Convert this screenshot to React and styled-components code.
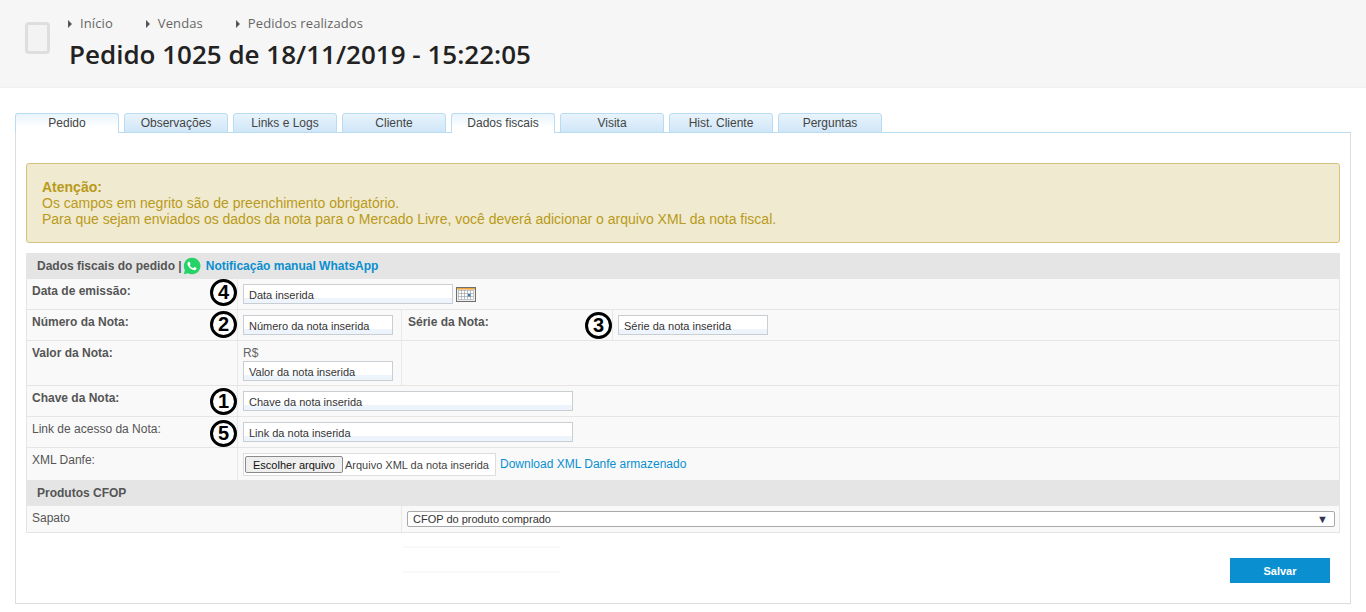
import React from "react";
import styled, { createGlobalStyle } from "styled-components";

const Global = createGlobalStyle`
  html, body { margin: 0; padding: 0; background: #fff; }
  body { font-family: "Liberation Sans", Arial, sans-serif; font-size: 12px; color: #555; }
  * { box-sizing: border-box; }
`;

const Header = styled.header`
  height: 88px;
  background: #f6f6f6;
  border-bottom: 1px solid #f0f0f0;
  display: flex;
  padding: 22px 0 0 25px;
`;
const PageIcon = styled.div`
  width: 25px;
  height: 32px;
  border: 3px solid #dedede;
  border-radius: 4px;
  background: #f3f3f3;
  flex: none;
`;
const HeaderText = styled.div`
  margin: -7px 0 0 19px;
  font-family: "Open Sans", sans-serif;
`;
const Crumbs = styled.nav`
  display: flex;
  height: 17px;
  margin-left: -1px;
`;
const Crumb = styled.span`
  display: flex;
  align-items: center;
  font-size: 13px;
  line-height: 17px;
  color: #666;
  letter-spacing: 0.1px;
  margin-right: 33px;
  &::before {
    content: "";
    border-left: 4px solid #555;
    border-top: 4px solid transparent;
    border-bottom: 4px solid transparent;
    margin-right: 8px;
  }
`;
const Title = styled.h1`
  margin: 5px 0 0;
  font-size: 26px;
  line-height: 34px;
  font-weight: 600;
  color: #222;
`;

const Main = styled.main`
  padding: 25px 15px 0;
`;
const Tabs = styled.div`
  display: flex;
  gap: 5px;
  height: 20px;
  position: relative;
  z-index: 1;
`;
const Tab = styled.div`
  width: 104px;
  height: 20px;
  border: 1px solid #b9dcf3;
  border-bottom: ${p => (p.$active ? "none" : "1px solid #b9dcf3")};
  border-radius: 3px 3px 0 0;
  background: ${p => (p.$active ? "linear-gradient(#e8f4fc, #fff 70%)" : "linear-gradient(#e9f4fc, #cfe6f8)")};
  text-align: center;
  font-size: 12px;
  line-height: 18px;
  color: #444;
`;
const Panel = styled.section`
  margin-top: -1px;
  height: 472px;
  width: 1336px;
  border: 1px solid #ddd;
  border-top-color: #b9dcf3;
  padding: 30px 10px 0 10px;
`;
const Alert = styled.div`
  height: 80px;
  width: 1314px;
  background: #f0ead0;
  border: 1px solid #d5c27c;
  border-radius: 3px;
  padding: 15px 15px;
  font-size: 14px;
  line-height: 16px;
  color: #b99a1a;
  strong { display: block; }
`;
const Form = styled.div`
  margin-top: 10px;
  width: 1314px;
  display: grid;
  grid-template-columns: 211px 164px 211px 1fr;
  background: #f9f9f9;
  border-left: 1px solid #e5e5e5;
  border-right: 1px solid #e5e5e5;
  border-bottom: 1px solid #e5e5e5;
`;
const SectionHead = styled.div`
  grid-column: 1 / -1;
  height: ${p => p.$h}px;
  background: #e5e5e5;
  display: flex;
  align-items: center;
  padding-left: 10px;
  font-weight: 700;
  font-size: 12px;
  color: #555;
`;
const WaIcon = styled.svg`
  width: 18px;
  height: 18px;
  margin: 0 5px 0 1px;
  flex: none;
`;
const WaLink = styled.a`
  color: #0a8fd0;
  font-weight: 700;
`;
const Cell = styled.div`
  grid-column: ${p => p.$span || "auto"};
  height: ${p => p.$h}px;
  border-bottom: ${p => (p.$flat ? "none" : "1px solid #e5e5e5")};
  border-right: ${p => (p.$last ? "none" : "1px solid #e8e8e8")};
`;
const LabelCell = styled(Cell)`
  display: flex;
  justify-content: space-between;
  align-items: flex-start;
  padding: 5px 0 0 ${p => p.$inset || 5}px;
  font-size: 12px;
  line-height: 14px;
  color: #555;
  font-weight: ${p => (p.$bold ? 700 : 400)};
`;
const FieldCell = styled(Cell)`
  display: flex;
  flex-direction: ${p => (p.$col ? "column" : "row")};
  align-items: flex-start;
  padding: 5px 0 0 5px;
`;
const Marker = styled.span`
  width: 27px;
  height: 27px;
  margin-top: ${p => p.$lift}px;
  border: 3px solid #000;
  border-radius: 50%;
  background: #fff;
  color: #000;
  font-size: 20px;
  line-height: 21px;
  font-weight: 700;
  text-align: center;
  flex: none;
`;
const Input = styled.input`
  width: ${p => p.$w}px;
  height: 20px;
  border: 1px solid #c9ced3;
  background: linear-gradient(#fff 72%, #edf4fb 72%);
  padding: 2px 5px 0;
  margin: 0;
  font-family: "Liberation Sans", Arial, sans-serif;
  font-size: 11px;
  color: #333;
  outline: none;
`;
const Currency = styled.span`
  font-size: 12px;
  line-height: 14px;
  margin-bottom: 1px;
  color: #666;
`;
const CalIcon = styled.svg`
  width: 20px;
  height: 15px;
  margin: 3px 0 0 3px;
  flex: none;
`;
const FileBox = styled.div`
  width: 253px;
  height: 23px;
  border: 1px solid #ddd;
  background: #fff;
  display: flex;
  align-items: center;
  padding-left: 1px;
  font-size: 11px;
  white-space: nowrap;
  color: #444;
`;
const FileButton = styled.button`
  width: 98px;
  height: 17px;
  padding: 0;
  margin-right: 2px;
  background: #efefef;
  border: 1px solid #8a8a8a;
  border-radius: 2px;
  font-family: "Liberation Sans", Arial, sans-serif;
  font-size: 11px;
  color: #111;
`;
const Download = styled.a`
  margin: 4px 0 0 4px;
  font-size: 12px;
  line-height: 14px;
  color: #0a8fd0;
`;
const SelectBox = styled.div`
  width: 928px;
  height: 16px;
  border: 1px solid #a9a9a9;
  border-radius: 2px;
  background: #fff;
  display: flex;
  justify-content: space-between;
  align-items: center;
  padding: 0 6px 0 5px;
  font-size: 11px;
  color: #333;
`;
const Arrow = styled.span`
  font-size: 11px;
  color: #333355;
`;
const Footer = styled.div`
  display: flex;
  justify-content: space-between;
  align-items: flex-start;
`;
const Ghosts = styled.div`
  display: flex;
  flex-direction: column;
  gap: 23px;
  margin: 13px 0 0 377px;
`;
const Ghost = styled.div`
  width: 157px;
  height: 2px;
  background: #f9f9f9;
`;
const Save = styled.button`
  width: 100px;
  height: 25px;
  margin: 25px 10px 0 0;
  border: none;
  background: #0a90d0;
  color: #fff;
  font-family: "Liberation Sans", Arial, sans-serif;
  font-size: 11px;
  font-weight: 700;
`;

const tabs = ["Pedido", "Observações", "Links e Logs", "Cliente", "Dados fiscais", "Visita", "Hist. Cliente", "Perguntas"];

const Calendar = () => (
  <CalIcon viewBox="0 0 20 15">
    <rect x="0.5" y="0.5" width="19" height="14" fill="#ececec" stroke="#6f6f6f" />
    <rect x="1" y="1" width="18" height="1.5" fill="#eda63a" />
    <g fill="#fff" stroke="#a4a8b0" strokeWidth="0.6">
      {[2.5, 5.5, 8.5, 11.5, 14.5].map(x => [3.5, 6.5, 9.5].map(y => <rect key={`${x}-${y}`} x={x} y={y} width="3" height="3" />))}
    </g>
    <rect x="12" y="7" width="2.5" height="2.5" fill="#2d7fb8" />
  </CalIcon>
);

const Whatsapp = () => (
  <WaIcon viewBox="0 0 24 24">
    <path d="M12 1a11 11 0 0 0-9.5 16.5L1 23l5.7-1.5A11 11 0 1 0 12 1z" fill="#25d366" />
    <path
      fill="#fff"
      d="M17.472 14.382c-.297-.149-1.758-.867-2.03-.967-.273-.099-.471-.148-.67.15-.197.297-.767.966-.94 1.164-.173.199-.347.223-.644.075-.297-.15-1.255-.463-2.39-1.475-.883-.788-1.48-1.761-1.653-2.059-.173-.297-.018-.458.13-.606.134-.133.298-.347.446-.52.149-.174.198-.298.298-.497.099-.198.05-.371-.025-.52-.075-.149-.669-1.612-.916-2.207-.242-.579-.487-.5-.669-.51-.173-.008-.371-.01-.57-.01-.198 0-.52.074-.792.372-.272.297-1.04 1.016-1.04 2.479 0 1.462 1.065 2.875 1.213 3.074.149.198 2.096 3.2 5.077 4.487.709.306 1.262.489 1.694.625.712.227 1.36.195 1.871.118.571-.085 1.758-.719 2.006-1.413.248-.694.248-1.289.173-1.413-.074-.124-.272-.198-.57-.347z"
    />
  </WaIcon>
);

export default function App() {
  return (
    <>
      <Global />
      <Header>
        <PageIcon />
        <HeaderText>
          <Crumbs>
            <Crumb>Início</Crumb>
            <Crumb>Vendas</Crumb>
            <Crumb>Pedidos realizados</Crumb>
          </Crumbs>
          <Title>Pedido 1025 de 18/11/2019 - 15:22:05</Title>
        </HeaderText>
      </Header>
      <Main>
        <Tabs>
          {tabs.map((t, i) => (
            <Tab key={t} $active={i === 0 || i === 4}>{t}</Tab>
          ))}
        </Tabs>
        <Panel>
          <Alert>
            <strong>Atenção:</strong>
            Os campos em negrito são de preenchimento obrigatório.
            <br />
            Para que sejam enviados os dados da nota para o Mercado Livre, você deverá adicionar o arquivo XML da nota fiscal.
          </Alert>
          <Form>
            <SectionHead $h={26}>
              Dados fiscais do pedido |<Whatsapp /><WaLink>Notificação manual WhatsApp</WaLink>
            </SectionHead>

            <LabelCell $bold $h={31}>Data de emissão:<Marker $lift={-5}>4</Marker></LabelCell>
            <FieldCell $span="2 / -1" $h={31} $last><Input $w={210} readOnly value="Data inserida" /><Calendar /></FieldCell>

            <LabelCell $bold $h={31}>Número da Nota:<Marker $lift={-4}>2</Marker></LabelCell>
            <FieldCell $h={31}><Input $w={150} readOnly value="Número da nota inserida" /></FieldCell>
            <LabelCell $bold $h={31} $inset={6}>Série da Nota:<Marker $lift={-3}>3</Marker></LabelCell>
            <FieldCell $h={31} $last><Input $w={150} readOnly value="Série da nota inserida" /></FieldCell>

            <LabelCell $bold $h={45}>Valor da Nota:</LabelCell>
            <FieldCell $col $h={45}><Currency>R$</Currency><Input $w={150} readOnly value="Valor da nota inserida" /></FieldCell>
            <Cell $span="3 / -1" $h={45} $last />

            <LabelCell $bold $h={31}>Chave da Nota:<Marker $lift={-3}>1</Marker></LabelCell>
            <FieldCell $span="2 / -1" $h={31} $last><Input $w={330} readOnly value="Chave da nota inserida" /></FieldCell>

            <LabelCell $h={31}>Link de acesso da Nota:<Marker $lift={-2}>5</Marker></LabelCell>
            <FieldCell $span="2 / -1" $h={31} $last><Input $w={330} readOnly value="Link da nota inserida" /></FieldCell>

            <LabelCell $h={32} $flat>XML Danfe:</LabelCell>
            <FieldCell $span="2 / -1" $h={32} $flat $last>
              <FileBox><FileButton>Escolher arquivo</FileButton>Arquivo XML da nota inserida</FileBox>
              <Download>Download XML Danfe armazenado</Download>
            </FieldCell>

            <SectionHead $h={26}>Produtos CFOP</SectionHead>

            <LabelCell $span="1 / 3" $h={26} $flat>Sapato</LabelCell>
            <FieldCell $span="3 / -1" $h={26} $flat $last>
              <SelectBox>CFOP do produto comprado<Arrow>▼</Arrow></SelectBox>
            </FieldCell>
          </Form>
          <Footer>
            <Ghosts><Ghost /><Ghost /></Ghosts>
            <Save>Salvar</Save>
          </Footer>
        </Panel>
      </Main>
    </>
  );
}
